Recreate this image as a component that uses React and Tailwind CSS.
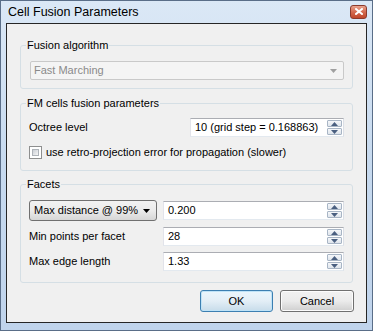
import React from "react";

const font = { fontFamily: "'Liberation Sans', Arial, sans-serif" };

function Spin({ value, w }) {
  return (
    <div className={`relative h-[19px] ${w} bg-white border border-[#abadb3] border-t-[#abadb3] border-l-[#e2e3ea] border-r-[#dbdfe6] border-b-[#e3e9ef] flex items-center`}>
      <span className="pl-[4px] text-[11px] leading-none text-black whitespace-nowrap">{value}</span>
      <div className="absolute right-[1px] top-[1px] bottom-[1px] w-[15px] flex flex-col gap-[1px]">
        <div className="flex-1 border border-[#a8b5c5] rounded-[1px] bg-gradient-to-b from-[#f5f7fa] to-[#dfe5ec] flex items-center justify-center">
          <svg width="7" height="4" viewBox="0 0 7 4"><path d="M0 4 L3.5 0 L7 4 Z" fill="#4a5f80" /></svg>
        </div>
        <div className="flex-1 border border-[#a8b5c5] rounded-[1px] bg-gradient-to-b from-[#f5f7fa] to-[#dfe5ec] flex items-center justify-center">
          <svg width="7" height="4" viewBox="0 0 7 4"><path d="M0 0 L3.5 4 L7 0 Z" fill="#4a5f80" /></svg>
        </div>
      </div>
    </div>
  );
}

function Group({ title, className, children }) {
  return (
    <div className={`relative border border-[#d5dfe5] rounded-[3px] ${className}`}>
      <span className="absolute left-[5px] top-[-9px] px-[1px] bg-[#f0f0f0] text-[11px] leading-[16px] text-black whitespace-nowrap">{title}</span>
      {children}
    </div>
  );
}

export default function App() {
  return (
    <div style={font} className="w-[373px] h-[331px] flex flex-col border border-[#5a6e88] bg-gradient-to-b from-[#dbe8f6] via-[#c7daef] to-[#c0d4ec]">
      <div className="h-[22px] flex items-center justify-between pl-[7px] pr-[5px]">
        <span className="text-[12.5px] text-black leading-none">Cell Fusion Parameters</span>
        <div className="w-[17px] h-[14px] mt-[-1px] rounded-[3px] border border-[#8b3a2c] bg-gradient-to-b from-[#e8a38f] via-[#d46a4f] to-[#c0472b] flex items-center justify-center">
          <svg width="8" height="7" viewBox="0 0 8 7"><path d="M1 1 L7 6 M7 1 L1 6" stroke="white" strokeWidth="2" strokeLinecap="square" /></svg>
        </div>
      </div>
      <div className="mx-[5px] mb-[7px] flex-1 border border-[#262626] bg-[#f0f0f0] flex flex-col px-[13px]">
        <Group title="Fusion algorithm" className="mt-[21px] h-[44px] pt-[15px] pl-[9px] pr-[8px]">
          <div className="h-[19px] border border-[#c9c9c9] rounded-[2px] bg-[#f4f4f4] flex items-center justify-between pl-[3px] pr-[6px]">
            <span className="text-[11px] leading-none text-[#8a8a8a]">Fast Marching</span>
            <svg width="7" height="4" viewBox="0 0 7 4"><path d="M0 0 L3.5 4 L7 0 Z" fill="#a0a0a0" /></svg>
          </div>
        </Group>
        <Group title="FM cells fusion parameters" className="mt-[14px] h-[68px] pt-[14px] pl-[8px] pr-[8px] flex flex-col">
          <div className="flex items-center justify-between">
            <span className="text-[11px] leading-none text-black">Octree level</span>
            <Spin value="10 (grid step = 0.168863)" w="w-[154px]" />
          </div>
          <div className="flex items-center mt-[9px]">
            <div className="w-[13px] h-[13px] border border-[#8e8f8f] bg-white p-[2px]">
              <div className="w-full h-full bg-gradient-to-br from-[#cbcfd5] to-[#f6f6f6] border border-[#aeb3b9]"></div>
            </div>
            <span className="ml-[4px] text-[11px] leading-none text-black whitespace-nowrap">use retro-projection error for propagation (slower)</span>
          </div>
        </Group>
        <Group title="Facets" className="mt-[13px] h-[99px] pt-[15px] pl-[8px] pr-[8px] flex flex-col gap-[6px]">
          <div className="flex items-center justify-between">
            <div className="w-[128px] h-[21px] rounded-[3px] border border-[#707070] bg-gradient-to-b from-[#f2f2f2] via-[#ebebeb] to-[#d6d6d6] flex items-center justify-between pl-[4px] pr-[6px]">
              <span className="text-[11px] leading-none text-black whitespace-nowrap">Max distance @ 99%</span>
              <svg width="7" height="4" viewBox="0 0 7 4"><path d="M0 0 L3.5 4 L7 0 Z" fill="#000" /></svg>
            </div>
            <Spin value="0.200" w="w-[181px]" />
          </div>
          <div className="flex items-center justify-between">
            <span className="text-[11px] leading-none text-black">Min points per facet</span>
            <Spin value="28" w="w-[181px]" />
          </div>
          <div className="flex items-center justify-between">
            <span className="text-[11px] leading-none text-black">Max edge length</span>
            <Spin value="1.33" w="w-[181px]" />
          </div>
        </Group>
        <div className="mt-[7px] flex justify-end gap-[7px] mr-[-1px]">
          <button className="w-[73px] h-[22px] rounded-[3px] border border-[#3c7fb1] bg-gradient-to-b from-[#eaf6fd] via-[#e3eef6] to-[#c7dcea] text-[11px] leading-none text-black shadow-[inset_0_0_0_1px_#bfe3f7]">OK</button>
          <button className="w-[74px] h-[22px] rounded-[3px] border border-[#707070] bg-gradient-to-b from-[#f2f2f2] via-[#ebebeb] to-[#cfcfcf] text-[11px] leading-none text-black shadow-[inset_0_0_0_1px_#fcfcfc]">Cancel</button>
        </div>
      </div>
    </div>
  );
}
